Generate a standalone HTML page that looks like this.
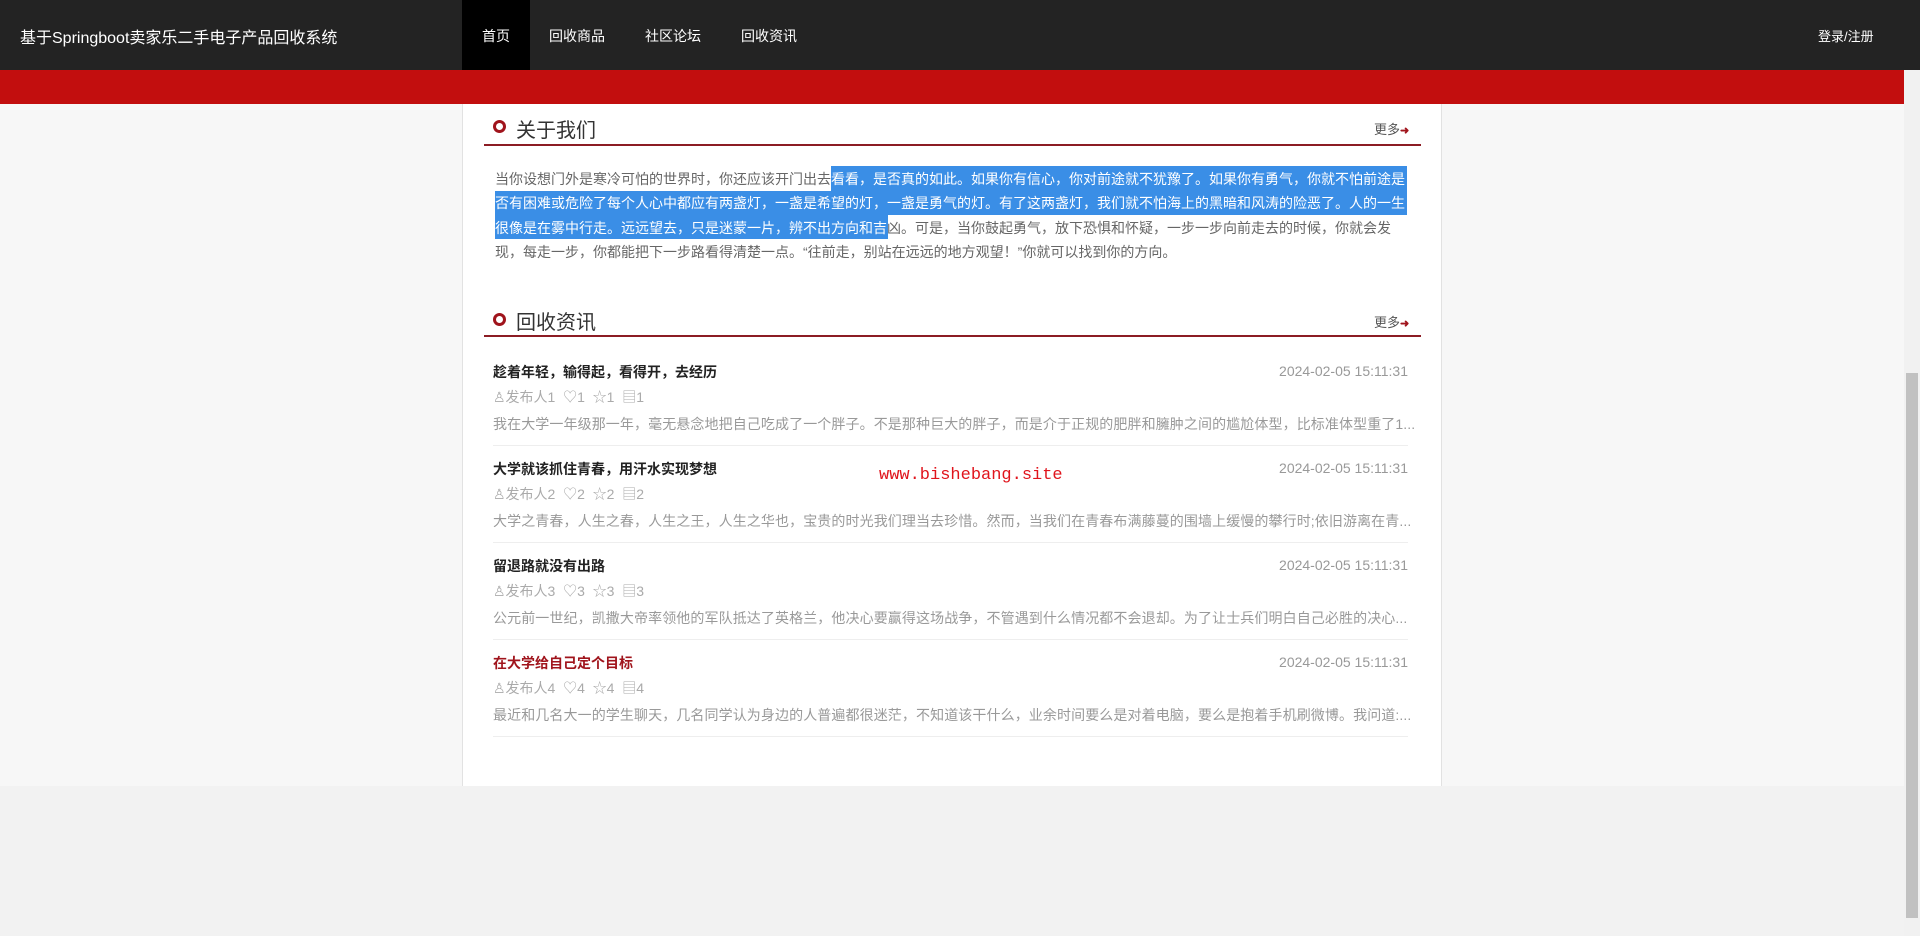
<!DOCTYPE html>
<html><head><meta charset="utf-8">
<style>
*{margin:0;padding:0;box-sizing:border-box}
body{width:1920px;height:936px;overflow:hidden;background:#f2f2f2;font-family:"Liberation Sans","Noto Sans CJK SC",sans-serif;position:relative}
.a{position:absolute;white-space:nowrap}
#hd{left:0;top:0;width:1920px;height:70px;background:#232323}
#red{left:0;top:70px;width:1920px;height:34px;background:#c20e0e}
#bg{left:0;top:104px;width:1904px;height:682px;background:#f7f7f7}
#panel{left:462px;top:104px;width:980px;height:682px;background:#fff;border-left:1px solid #e2e2e2;border-right:1px solid #e2e2e2}
.nav{color:#fff;font-size:14px;top:26px}
.h2{font-size:20px;color:#333}
.ic{width:13px;height:13px;border-radius:50%;border:3.5px solid #a0141c;background:#fff}
.line{height:2px;background:#8c1c24;left:484px;width:937px}
.more{font-size:13px;color:#555}
.more b{color:#a0141c;font-size:11px}
.p{font-size:14px;color:#666;left:495px;letter-spacing:0px}
.sel{background:#3a8ee6;color:#fff}
.t{font-size:14px;color:#222;font-weight:bold;left:493px}
.d{font-size:14px;color:#999;right:512px}
.m{font-size:14px;color:#aaa;left:493px}
.s{font-size:14px;color:#999;left:493px;letter-spacing:0.1px}
.sep{left:493px;width:915px;height:1px;background:#eee}
</style></head><body>
<div class="a" id="hd"></div>
<div class="a" style="left:462px;top:0;width:68px;height:70px;background:#000"></div>
<div class="a" style="left:20px;top:24px;color:#fff;font-size:16px">基于Springboot卖家乐二手电子产品回收系统</div>
<div class="a nav" style="left:482px">首页</div>
<div class="a nav" style="left:549px">回收商品</div>
<div class="a nav" style="left:645px">社区论坛</div>
<div class="a nav" style="left:741px">回收资讯</div>
<div class="a nav" style="left:1818px;font-size:13px">登录/注册</div>
<div class="a" id="red"></div>
<div class="a" id="bg"></div>
<div class="a" id="panel"></div>
<div class="a" style="left:1904px;top:70px;width:16px;height:866px;background:#f1f1f1"></div>
<div class="a" style="left:1906px;top:373px;width:12px;height:545px;background:#c1c1c1"></div>

<div class="a ic" style="left:493px;top:120px"></div>
<div class="a h2" style="left:516px;top:114px">关于我们</div>
<div class="a more" style="left:1374px;top:119px">更多<b>➜</b></div>
<div class="a line" style="top:144px"></div>

<div class="a sel" style="left:831px;top:166px;width:576px;height:25px"></div>
<div class="a sel" style="left:495px;top:191px;width:912px;height:24px"></div>
<div class="a sel" style="left:495px;top:215px;width:393px;height:24px"></div>
<div class="a p" style="top:169px">当你设想门外是寒冷可怕的世界时，你还应该开门出去<span style="color:#fff">看看，是否真的如此。如果你有信心，你对前途就不犹豫了。如果你有勇气，你就不怕前途是</span></div>
<div class="a p" style="top:193px;color:#fff">否有困难或危险了每个人心中都应有两盏灯，一盏是希望的灯，一盏是勇气的灯。有了这两盏灯，我们就不怕海上的黑暗和风涛的险恶了。人的一生</div>
<div class="a p" style="top:218px"><span style="color:#fff">很像是在雾中行走。远远望去，只是迷蒙一片，辨不出方向和吉</span>凶。可是，当你鼓起勇气，放下恐惧和怀疑，一步一步向前走去的时候，你就会发</div>
<div class="a p" style="top:242px">现，每走一步，你都能把下一步路看得清楚一点。“往前走，别站在远远的地方观望！”你就可以找到你的方向。</div>

<div class="a ic" style="left:493px;top:313px"></div>
<div class="a h2" style="left:516px;top:306px">回收资讯</div>
<div class="a more" style="left:1374px;top:312px">更多<b>➜</b></div>
<div class="a line" style="top:335px"></div>

<div class="a t" style="top:362px">趁着年轻，输得起，看得开，去经历</div>
<div class="a d" style="top:363px">2024-02-05 15:11:31</div>
<div class="a m" style="top:387px">♙发布人1 &nbsp;♡1 &nbsp;☆1 &nbsp;▤1</div>
<div class="a s" style="top:414px">我在大学一年级那一年，毫无悬念地把自己吃成了一个胖子。不是那种巨大的胖子，而是介于正规的肥胖和臃肿之间的尴尬体型，比标准体型重了1...</div>
<div class="a sep" style="top:445px"></div>

<div class="a t" style="top:459px">大学就该抓住青春，用汗水实现梦想</div>
<div class="a d" style="top:460px">2024-02-05 15:11:31</div>
<div class="a m" style="top:484px">♙发布人2 &nbsp;♡2 &nbsp;☆2 &nbsp;▤2</div>
<div class="a s" style="top:511px">大学之青春，人生之春，人生之王，人生之华也，宝贵的时光我们理当去珍惜。然而，当我们在青春布满藤蔓的围墙上缓慢的攀行时;依旧游离在青...</div>
<div class="a sep" style="top:542px"></div>

<div class="a t" style="top:556px">留退路就没有出路</div>
<div class="a d" style="top:557px">2024-02-05 15:11:31</div>
<div class="a m" style="top:581px">♙发布人3 &nbsp;♡3 &nbsp;☆3 &nbsp;▤3</div>
<div class="a s" style="top:608px">公元前一世纪，凯撒大帝率领他的军队抵达了英格兰，他决心要赢得这场战争，不管遇到什么情况都不会退却。为了让士兵们明白自己必胜的决心...</div>
<div class="a sep" style="top:639px"></div>

<div class="a t" style="top:653px;color:#a0141c">在大学给自己定个目标</div>
<div class="a d" style="top:654px">2024-02-05 15:11:31</div>
<div class="a m" style="top:678px">♙发布人4 &nbsp;♡4 &nbsp;☆4 &nbsp;▤4</div>
<div class="a s" style="top:705px">最近和几名大一的学生聊天，几名同学认为身边的人普遍都很迷茫，不知道该干什么，业余时间要么是对着电脑，要么是抱着手机刷微博。我问道:...</div>
<div class="a sep" style="top:736px"></div>

<div class="a" style="left:879px;top:466px;color:#e0141c;font-family:'Liberation Mono',monospace;font-size:17px">www.bishebang.site</div>
</body></html>
